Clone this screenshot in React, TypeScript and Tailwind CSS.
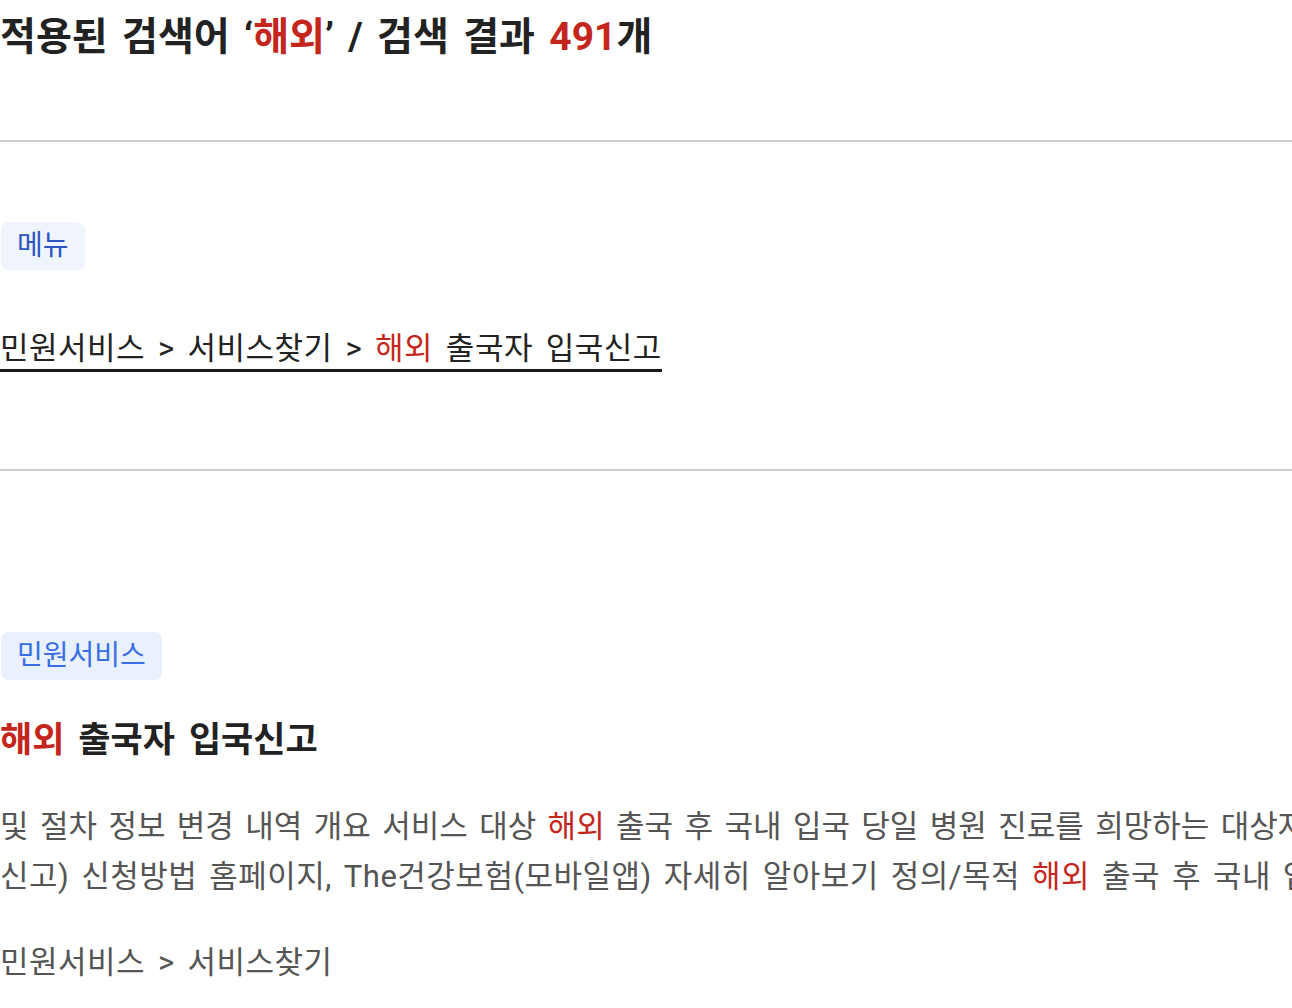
import React from "react";

const F = "font-['Roboto','Noto_Sans_CJK_KR',sans-serif]";

export default function App() {
  return (
    <div className={`${F} w-[1292px] min-h-[1008px] bg-white overflow-hidden text-[#222]`}>
      <h1 className="pt-[4px] text-[39px] font-bold leading-[66px] [word-spacing:0.12em] whitespace-nowrap">
        적용된 검색어 ‘<span className="text-[#c4261d]">해외</span>’ / 검색 결과{" "}
        <span className="text-[#c4261d]">491</span>개
      </h1>
      <div className="mt-[70px] h-[2px] bg-[#cccccc]" />

      <div className="mt-[80px] flex">
        <span className="ml-[1px] inline-flex h-[48px] items-center rounded-[8px] bg-[#eff4fd] px-[16px] text-[28px] text-[#2b56c2]">
          메뉴
        </span>
      </div>

      <div className="mt-[59px] flex">
        <a className="inline-block border-b-[3px] border-[#1a1a1a] text-[31px] leading-[40px] tracking-[0.5px] [word-spacing:0.15em] whitespace-nowrap text-[#222]">
          민원서비스 &gt; 서비스찾기 &gt; <span className="text-[#c4261d]">해외</span> 출국자 입국신고
        </a>
      </div>

      <div className="mt-[97px] h-[2px] bg-[#cccccc]" />

      <div className="mt-[161px] flex">
        <span className="ml-[1px] inline-flex h-[48px] items-center rounded-[8px] bg-[#e9f0fe] px-[16px] text-[28px] text-[#3a6ee6]">
          민원서비스
        </span>
      </div>

      <h2 className="mt-[37px] text-[35px] font-bold leading-[48px] [word-spacing:0.15em] whitespace-nowrap">
        <span className="text-[#c4261d]">해외</span> 출국자 입국신고
      </h2>

      <div className="mt-[37px] text-[31px] leading-[50px] text-[#555] [word-spacing:0.12em] whitespace-nowrap overflow-hidden">
        <div>
          및 절차 정보 변경 내역 개요 서비스 대상 <span className="text-[#c4261d]">해외</span> 출국 후 국내 입국 당일 병원 진료를 희망하는 대상자
        </div>
        <div className="tracking-[0.5px]">
          신고) 신청방법 홈페이지, The건강보험(모바일앱) 자세히 알아보기 정의/목적 <span className="text-[#c4261d]">해외</span> 출국 후 국내 입국
        </div>
      </div>

      <div className="mt-[36px] text-[31px] leading-[50px] tracking-[0.5px] text-[#555] [word-spacing:0.15em] whitespace-nowrap">
        민원서비스 &gt; 서비스찾기
      </div>
    </div>
  );
}
